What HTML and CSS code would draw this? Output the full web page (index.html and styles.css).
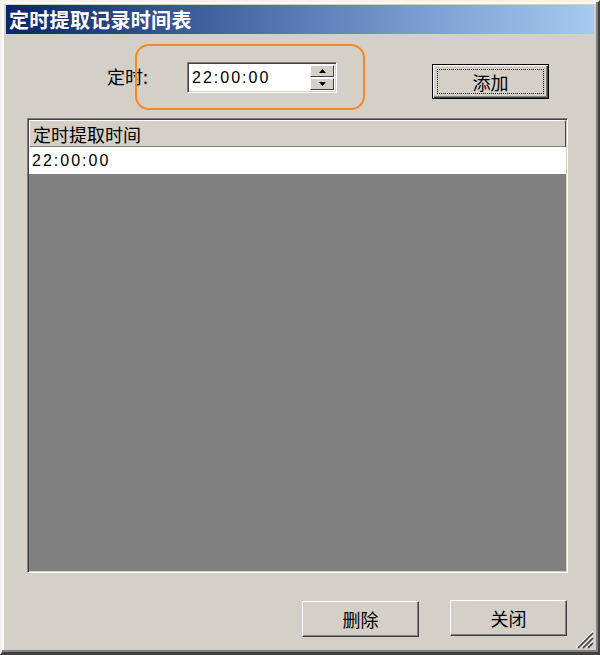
FILE: index.html
```html
<!DOCTYPE html>
<html lang="zh">
<head>
<meta charset="utf-8">
<title>定时提取记录时间表</title>
<link rel="stylesheet" href="styles.css">
</head>
<body>
<div class="window">
  <div class="titlebar"><span class="title">定时提取记录时间表</span></div>
  <div class="content">
    <div class="toprow">
      <span class="label">定时:</span>
      <div class="timebox">
        <span class="timetext">22:00:00</span>
        <div class="spin">
          <div class="spinbtn"><svg width="7" height="4" viewBox="0 0 7 4"><path d="M3.5 0 L7 4 L0 4 Z" fill="#000"/></svg></div>
          <div class="spinbtn"><svg width="7" height="4" viewBox="0 0 7 4"><path d="M0 0 L7 0 L3.5 4 Z" fill="#000"/></svg></div>
        </div>
      </div>
      <div class="btn default add"><span class="focus">添加</span></div>
    </div>
    <div class="list">
      <div class="listhead"><span>定时提取时间</span></div>
      <div class="listrow">22:00:00</div>
      <div class="listempty"></div>
    </div>
    <div class="bottomrow">
      <div class="btn del">删除</div>
      <div class="btn close">关闭</div>
    </div>
  </div>
  <svg class="grip" width="20" height="20" viewBox="0 0 20 20">
    <path d="M19 4 L4 19 M19 9 L9 19 M19 14 L14 19" stroke="#404040" stroke-width="1.6"/>
    <path d="M19 2 L2 19 M19 7 L7 19 M19 12 L12 19" stroke="#ffffff" stroke-width="1"/>
  </svg>
  <div class="highlight"></div>
</div>
</body>
</html>
```
FILE: styles.css
```css
* { box-sizing: border-box; }
html, body { margin: 0; padding: 0; }
body {
  width: 600px;
  height: 655px;
  overflow: hidden;
  font-family: "Noto Sans CJK SC", "Liberation Sans", sans-serif;
  background: #d4d0c8;
}
.window {
  position: relative;
  width: 600px;
  height: 655px;
  background: #d4d0c8;
  border-left: 2px solid #f4f2ee;
  border-top: 2px solid #f4f2ee;
  border-right: 2px solid #404040;
  border-bottom: 3px solid #404040;
  box-shadow: inset -2px -2px 0 #808080, inset 2px 2px 0 #ffffff;
  padding: 3px 4px 0 4px;
}
.titlebar {
  height: 29px;
  width: 588px;
  background: linear-gradient(to right, #0a246a 0%, #3a5a98 30%, #7a9cd0 70%, #a6caf0 100%);
  display: flex;
  align-items: center;
  padding-left: 3px;
}
.title {
  color: #ffffff;
  font-weight: bold;
  font-size: 20px;
  line-height: 1;
  letter-spacing: 0.3px;
}
.content {
  padding-top: 28px;
}
.toprow {
  display: flex;
  align-items: flex-start;
  height: 36px;
}
.label {
  margin-left: 101px;
  margin-top: 2px;
  font-size: 18px;
  line-height: 24px;
  color: #000;
  width: 80px;
}
.timebox {
  width: 150px;
  height: 31px;
  background: #fff;
  border-top: 1px solid #808080;
  border-left: 1px solid #808080;
  border-right: 1px solid #ffffff;
  border-bottom: 1px solid #ffffff;
  box-shadow: inset 1px 1px 0 #404040, inset -1px -1px 0 #d4d0c8;
  display: flex;
  align-items: center;
  padding: 0 2px 0 4px;
}
.timetext {
  font-family: "Liberation Sans", sans-serif;
  font-size: 16px;
  letter-spacing: 2px;
  flex: 1;
  color: #000;
}
.spin {
  display: flex;
  flex-direction: column;
  gap: 1px;
}
.spinbtn {
  width: 24px;
  height: 12px;
  background: #d4d0c8;
  border-top: 1px solid #ffffff;
  border-left: 1px solid #ffffff;
  border-right: 1px solid #404040;
  border-bottom: 1px solid #404040;
  display: flex;
  align-items: center;
  justify-content: center;
}
.btn {
  width: 117px;
  height: 36px;
  background: #d4d0c8;
  border-top: 1px solid #ffffff;
  border-left: 1px solid #ffffff;
  border-right: 1px solid #404040;
  border-bottom: 1px solid #404040;
  box-shadow: inset -1px -1px 0 #808080;
  display: flex;
  align-items: center;
  justify-content: center;
  font-size: 18px;
  color: #000;
}
.btn.default {
  border: 1px solid #000;
  box-shadow: inset 1px 1px 0 #ffffff, inset -1px -1px 0 #404040, inset -2px -2px 0 #808080;
  padding: 4px;
}
.add {
  margin-left: 95px;
  margin-top: 2px;
  height: 35px;
}
.focus {
  width: 100%;
  height: 100%;
  border: 1px dotted #000;
  display: flex;
  align-items: center;
  justify-content: center;
}
.list {
  margin-top: 20px;
  margin-left: 21px;
  width: 541px;
  height: 455px;
  border-top: 1px solid #808080;
  border-left: 1px solid #808080;
  border-right: 1px solid #ffffff;
  border-bottom: 1px solid #ffffff;
  box-shadow: inset 1px 1px 0 #404040, inset -1px -1px 0 #d4d0c8;
  padding: 1px;
  display: flex;
  flex-direction: column;
  background: #808080;
}
.listhead {
  height: 27px;
  background: #d4d0c8;
  border-top: 1px solid #ffffff;
  border-left: 1px solid #ffffff;
  border-right: 1px solid #404040;
  border-bottom: 1px solid #808080;
  display: flex;
  align-items: center;
  padding-left: 3px;
  font-size: 18px;
  color: #000;
}
.listrow {
  height: 27px;
  background: #ffffff;
  font-family: "Liberation Sans", sans-serif;
  font-size: 16px;
  letter-spacing: 2px;
  display: flex;
  align-items: center;
  padding-left: 3px;
  color: #000;
}
.listempty {
  flex: 1;
  background: #808080;
}
.bottomrow {
  display: flex;
  margin-top: 27px;
}
.del {
  margin-left: 296px;
  margin-top: 1px;
}
.close {
  margin-left: 31px;
}
.grip {
  position: absolute;
  right: 4px;
  bottom: 3px;
}
.highlight {
  position: absolute;
  left: 133px;
  top: 42px;
  width: 230px;
  height: 66px;
  border: 2px solid #f28a24;
  border-radius: 14px;
}
```
